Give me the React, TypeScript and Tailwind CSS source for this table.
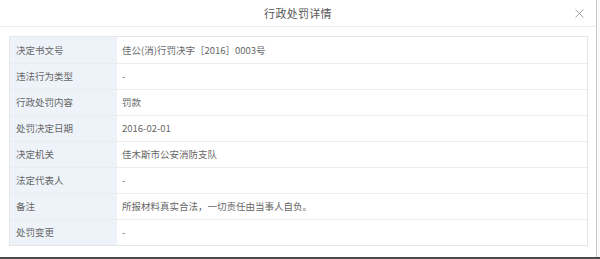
import React from 'react';
import { X } from 'lucide-react';

const rows: { label: string; value: string }[] = [
  { label: '决定书文号', value: '佳公(消)行罚决字［2016］0003号' },
  { label: '违法行为类型', value: '-' },
  { label: '行政处罚内容', value: '罚款' },
  { label: '处罚决定日期', value: '2016-02-01' },
  { label: '决定机关', value: '佳木斯市公安消防支队' },
  { label: '法定代表人', value: '-' },
  { label: '备注', value: '所报材料真实合法，一切责任由当事人自负。' },
  { label: '处罚变更', value: '-' },
];

const App: React.FC = () => {
  return (
    <div
      className="w-[600px] h-[259px] flex flex-col bg-[#f3f3f3] overflow-hidden"
      style={{ fontFamily: '"Noto Sans CJK SC", "Liberation Sans", sans-serif' }}
    >
      <div className="flex h-[257px]">
        {/* Modal */}
        <div className="w-[597px] h-full bg-white border-r border-[#c9c9c9] flex flex-col">
          {/* Header */}
          <div className="h-[27px] flex items-center justify-center relative border-b border-[#ececec]">
            <span className="text-[11px] text-[#555] tracking-[0.3px]">行政处罚详情</span>
            <X className="absolute right-[9px] top-[6px] w-[15px] h-[15px] text-[#888]" strokeWidth={1.2} />
          </div>

          {/* Table */}
          <div className="pl-[9px] pr-[8px] pt-[9px]">
            <div className="border border-[#e6e6e6]">
              {rows.map((r, i) => (
                <div
                  key={r.label}
                  className={`flex h-[26px] ${i > 0 ? 'border-t border-[#ececec]' : ''}`}
                >
                  <div className="w-[107px] bg-[#eef3fa] flex items-center pl-[6px] text-[9.5px] text-[#666]">
                    {r.label}
                  </div>
                  <div className="flex-1 flex items-center pl-[5px] text-[9.5px] text-[#666]">
                    {r.value}
                  </div>
                </div>
              ))}
            </div>
          </div>
        </div>
        <div className="flex-1 bg-[#fafafa]" />
      </div>
      <div className="h-[2px] bg-[#4a4a4a]" />
    </div>
  );
};

export default App;
